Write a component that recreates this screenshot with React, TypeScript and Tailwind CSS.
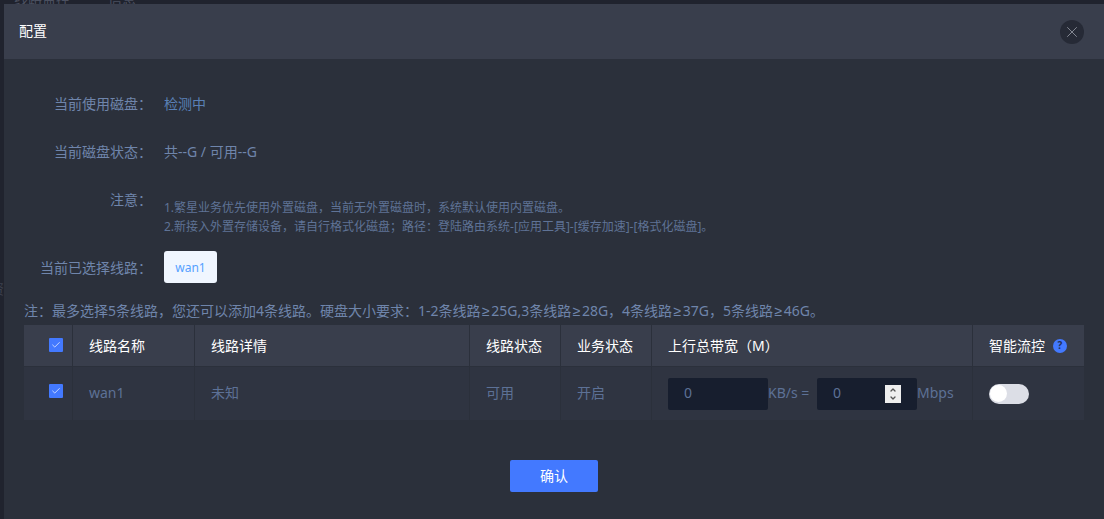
import { ChevronDown, ChevronUp, Check, X } from 'lucide-react'

const FONT = "font-['Noto_Sans','Noto_Sans_CJK_SC',sans-serif]"

function CheckBox() {
  return (
    <span className="flex h-[14px] w-[14px] items-center justify-center rounded-[1px] bg-[#4379ff]">
      <Check size={10} strokeWidth={2} className="text-[#dfe8ff]" />
    </span>
  )
}

function FormRow({ label, children, className }: { label: string; children: React.ReactNode; className: string }) {
  return (
    <div className={`flex items-center ${className}`}>
      <div className="w-[148px] flex-shrink-0 text-right text-[14px] text-[#6f85ab]">{label}</div>
      <div className="ml-[12px] min-w-0 flex-1">{children}</div>
    </div>
  )
}

// the CJK fallback draws this sign too wide
function Gte() {
  return <span className="px-[1.5px] font-['Liberation_Sans',sans-serif]">≥</span>
}

export default function App() {
  return (
    <div className={`relative h-[519px] w-full overflow-hidden bg-[#20232e] ${FONT}`}>
      {/* page behind the modal, only its edge shows */}
      <div className="-mt-[8px] flex gap-[38px] pl-[14px] text-[14px] leading-[14px] text-[#4b5060]">
        <span>线路监控</span>
        <span>信息</span>
      </div>
      <div className="absolute -left-[10px] top-[278px] text-[14px] text-[#3d414e]">资</div>

      <div className="absolute bottom-0 left-[4px] right-0 top-[4px] bg-[#2b303b]">
        {/* Header */}
        <div className="flex h-[55px] items-center justify-between bg-[#393e4c] pl-[15px] pr-[20px]">
          <span className="pb-[2px] text-[14px] text-white">配置</span>
          <button className="flex h-[24px] w-[24px] items-center justify-center rounded-full bg-[#262a36]">
            <X size={18} strokeWidth={1} className="text-[#a2a6b0]" />
          </button>
        </div>

        {/* Info rows */}
        <FormRow label="当前使用磁盘：" className="mt-[32px] h-[24px]">
          <span className="text-[14px] text-[#5a80b6]">检测中</span>
        </FormRow>
        <FormRow label="当前磁盘状态：" className="mt-[24px] h-[24px]">
          <span className="text-[14px] text-[#6f85ab]">共--G / 可用--G</span>
        </FormRow>
        <div className="mt-[25px] flex items-start">
          <div className="w-[148px] flex-shrink-0 text-right text-[14px] leading-[24px] text-[#6f85ab]">注意：</div>
          <div className="ml-[12px] pt-[10px] text-[12px] leading-[19px] text-[#5f7396]">
            <div>1.繁星业务优先使用外置磁盘，当前无外置磁盘时，系统默认使用内置磁盘。</div>
            <div>2.新接入外置存储设备，请自行格式化磁盘；路径：登陆路由系统-[应用工具]-[缓存加速]-[格式化磁盘]。</div>
          </div>
        </div>
        <FormRow label="当前已选择线路：" className="mt-[15px] h-[32px]">
          <span className="flex h-[32px] w-[53px] items-center justify-center rounded-[3px] bg-[#f0f6ff] pt-[2px] text-[12px] text-[#55a1ff]">
            wan1
          </span>
        </FormRow>

        <div className="ml-[20px] mt-[19px] text-[14px] leading-[18px] text-[#6f85ab]">
          注：最多选择5条线路，您还可以添加4条线路。硬盘大小要求：1-2条线路<Gte />25G,3条线路<Gte />28G，4条线路<Gte />37G，5条线路<Gte />46G。
        </div>

        {/* Table */}
        <div className="ml-[20px] mt-[5px] w-[1060px]">
          <div className="flex h-[42px] items-center border-b border-[#2b303b] bg-[#393e4c] text-[14px] text-white">
            <div className="flex h-full w-[49px] items-center justify-center border-r border-[#2b303b] pb-[1px] pl-[16px]"><CheckBox /></div>
            <div className="flex h-full w-[122px] items-center border-r border-[#2b303b] pl-[16px]">线路名称</div>
            <div className="flex h-full w-[275px] items-center border-r border-[#2b303b] pl-[16px]">线路详情</div>
            <div className="flex h-full w-[91px] items-center border-r border-[#2b303b] pl-[16px]">线路状态</div>
            <div className="flex h-full w-[91px] items-center border-r border-[#2b303b] pl-[16px]">业务状态</div>
            <div className="flex h-full w-[321px] items-center border-r border-[#2b303b] pl-[16px]">上行总带宽（M）</div>
            <div className="flex h-full flex-1 items-center pl-[16px]">
              智能流控
              <span className="ml-[8px] flex h-[14px] w-[14px] items-center justify-center rounded-full bg-[#4379ff] text-[10px] font-bold text-[#23305c]">?</span>
            </div>
          </div>
          <div className="flex h-[53px] items-center bg-[#2f3441] text-[14px] text-[#5d7196]">
            <div className="flex h-full w-[49px] items-start justify-center border-r border-[#2b303b] pl-[16px] pt-[17px]"><CheckBox /></div>
            <div className="flex h-full w-[122px] items-center border-r border-[#2b303b] pb-[2px] pl-[16px]">wan1</div>
            <div className="flex h-full w-[275px] items-center border-r border-[#2b303b] pb-[2px] pl-[16px]">未知</div>
            <div className="flex h-full w-[91px] items-center border-r border-[#2b303b] pb-[2px] pl-[16px]">可用</div>
            <div className="flex h-full w-[91px] items-center border-r border-[#2b303b] pb-[2px] pl-[16px]">开启</div>
            <div className="flex h-full w-[321px] items-center border-r border-[#2b303b] pl-[16px]">
              <div className="flex h-[32px] w-[100px] items-center rounded-[2px] bg-[#171e2e] pb-[2px] pl-[16px]">0</div>
              <span className="mb-[2px] w-[49px] whitespace-nowrap">KB/s =</span>
              <div className="flex h-[32px] w-[100px] items-center justify-between rounded-[2px] bg-[#171e2e] pl-[16px] pr-[16px]">
                <span className="mb-[2px]">0</span>
                <span className="flex h-[18px] w-[16px] flex-col items-center justify-center bg-[#eeeeee] text-[#555]">
                  <ChevronUp size={8} strokeWidth={4} />
                  <ChevronDown size={8} strokeWidth={4} />
                </span>
              </div>
              <span className="mb-[2px]">Mbps</span>
            </div>
            <div className="flex h-full flex-1 items-center pl-[16px]">
              <span className="flex h-[20px] w-[40px] items-center rounded-full bg-[#dcdee6] pl-[1px]">
                <span className="h-[17px] w-[17px] rounded-full bg-white" />
              </span>
            </div>
          </div>
        </div>

        <div className="mt-[40px] flex justify-center">
          <button className="h-[32px] w-[88px] rounded-[2px] bg-[#4379ff] pb-[2px] text-[14px] text-white">确认</button>
        </div>
      </div>
    </div>
  )
}
